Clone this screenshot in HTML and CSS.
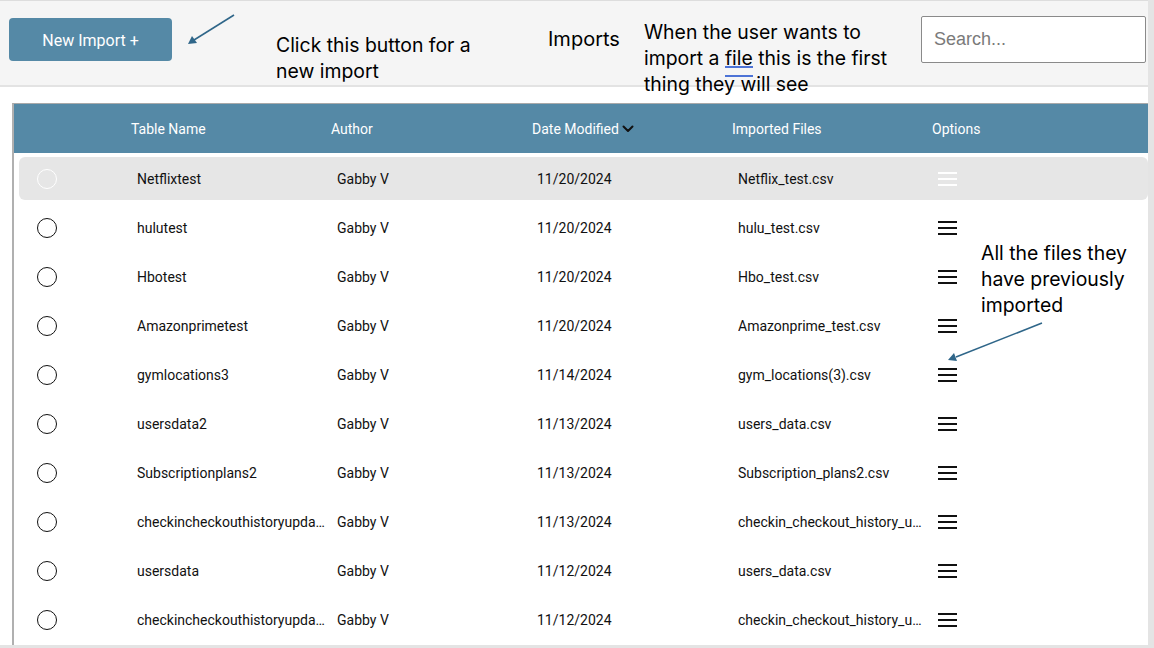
FILE: index.html
```html
<!DOCTYPE html>
<html lang="en">
<head>
<meta charset="utf-8">
<title>Imports</title>
<link rel="stylesheet" href="styles.css">
</head>
<body>
<div class="page">
  <header class="topbar">
    <button class="new-btn">New Import +</button>
    <h1 class="title">Imports</h1>
    <input class="search" type="text" placeholder="Search...">
  </header>

  <section class="table">
    <div class="thead">
      <div class="cell"></div>
      <div class="cell">Table Name</div>
      <div class="cell">Author</div>
      <div class="cell">Date Modified <svg class="chev" width="12" height="8" viewBox="0 0 12 8"><path d="M1.5 1.5 L6 6 L10.5 1.5" fill="none" stroke="#111" stroke-width="2" stroke-linecap="round" stroke-linejoin="round"/></svg></div>
      <div class="cell">Imported Files</div>
      <div class="cell">Options</div>
    </div>
    <div class="tbody">
      <div class="row active">
        <div class="cell"><span class="radio"></span></div>
        <div class="cell">Netflixtest</div>
        <div class="cell">Gabby V</div>
        <div class="cell">11/20/2024</div>
        <div class="cell">Netflix_test.csv</div>
        <div class="cell"><span class="menu"><i></i><i></i><i></i></span></div>
      </div>
      <div class="row">
        <div class="cell"><span class="radio"></span></div>
        <div class="cell">hulutest</div>
        <div class="cell">Gabby V</div>
        <div class="cell">11/20/2024</div>
        <div class="cell">hulu_test.csv</div>
        <div class="cell"><span class="menu"><i></i><i></i><i></i></span></div>
      </div>
      <div class="row">
        <div class="cell"><span class="radio"></span></div>
        <div class="cell">Hbotest</div>
        <div class="cell">Gabby V</div>
        <div class="cell">11/20/2024</div>
        <div class="cell">Hbo_test.csv</div>
        <div class="cell"><span class="menu"><i></i><i></i><i></i></span></div>
      </div>
      <div class="row">
        <div class="cell"><span class="radio"></span></div>
        <div class="cell">Amazonprimetest</div>
        <div class="cell">Gabby V</div>
        <div class="cell">11/20/2024</div>
        <div class="cell">Amazonprime_test.csv</div>
        <div class="cell"><span class="menu"><i></i><i></i><i></i></span></div>
      </div>
      <div class="row">
        <div class="cell"><span class="radio"></span></div>
        <div class="cell">gymlocations3</div>
        <div class="cell">Gabby V</div>
        <div class="cell">11/14/2024</div>
        <div class="cell">gym_locations(3).csv</div>
        <div class="cell"><span class="menu"><i></i><i></i><i></i></span></div>
      </div>
      <div class="row">
        <div class="cell"><span class="radio"></span></div>
        <div class="cell">usersdata2</div>
        <div class="cell">Gabby V</div>
        <div class="cell">11/13/2024</div>
        <div class="cell">users_data.csv</div>
        <div class="cell"><span class="menu"><i></i><i></i><i></i></span></div>
      </div>
      <div class="row">
        <div class="cell"><span class="radio"></span></div>
        <div class="cell">Subscriptionplans2</div>
        <div class="cell">Gabby V</div>
        <div class="cell">11/13/2024</div>
        <div class="cell">Subscription_plans2.csv</div>
        <div class="cell"><span class="menu"><i></i><i></i><i></i></span></div>
      </div>
      <div class="row">
        <div class="cell"><span class="radio"></span></div>
        <div class="cell">checkincheckouthistoryupdated</div>
        <div class="cell">Gabby V</div>
        <div class="cell">11/13/2024</div>
        <div class="cell">checkin_checkout_history_updated.csv</div>
        <div class="cell"><span class="menu"><i></i><i></i><i></i></span></div>
      </div>
      <div class="row">
        <div class="cell"><span class="radio"></span></div>
        <div class="cell">usersdata</div>
        <div class="cell">Gabby V</div>
        <div class="cell">11/12/2024</div>
        <div class="cell">users_data.csv</div>
        <div class="cell"><span class="menu"><i></i><i></i><i></i></span></div>
      </div>
      <div class="row">
        <div class="cell"><span class="radio"></span></div>
        <div class="cell">checkincheckouthistoryupdated2</div>
        <div class="cell">Gabby V</div>
        <div class="cell">11/12/2024</div>
        <div class="cell">checkin_checkout_history_updated2.csv</div>
        <div class="cell"><span class="menu"><i></i><i></i><i></i></span></div>
      </div>
    </div>
  </section>

  <p class="note note-btn">Click this button for a<br>new import</p>
  <p class="note note-top">When the user wants to<br>import a <span class="spell">file</span> this is the first<br>thing they will see</p>
  <p class="note note-files">All the files they<br>have previously<br>imported</p>

  <svg class="arrow arrow-btn" width="60" height="40" viewBox="0 0 60 40">
    <line x1="56" y1="2" x2="16" y2="27" stroke="#2f6689" stroke-width="1.6"/>
    <polygon points="10,31 14,23 19,30" fill="#2f6689"/>
  </svg>
  <svg class="arrow arrow-files" width="110" height="50" viewBox="0 0 110 50">
    <line x1="104" y1="3" x2="18" y2="37" stroke="#2f6689" stroke-width="1.6"/>
    <polygon points="10,40 16,33 19,41" fill="#2f6689"/>
  </svg>
</div>
</body>
</html>
```

FILE: styles.css
```css
* { box-sizing: border-box; }

html, body {
  margin: 0;
  padding: 0;
  background: #e4e4e4;
}

body {
  width: 1154px;
  height: 648px;
  overflow: hidden;
  font-family: Roboto, "Liberation Sans", sans-serif;
}

.page {
  position: relative;
  width: 1148px;
  height: 645px;
  background: #ffffff;
  overflow: hidden;
}

/* ---------- top bar ---------- */
.topbar {
  display: flex;
  align-items: center;
  height: 87px;
  padding: 14px 2px 22px 9px;
  background: #f5f5f5;
  border-top: 1px solid #dddddd;
  border-bottom: 2px solid #e3e3e3;
}

.new-btn {
  width: 163px;
  height: 43px;
  border: none;
  border-radius: 4px;
  background: #5589a6;
  color: #ffffff;
  font-family: Roboto, "Liberation Sans", sans-serif;
  font-size: 16px;
  padding: 3px 0 0 0;
}

.title {
  margin: 0 0 0 376px;
  font-family: Inter, "Noto Sans", sans-serif;
  font-size: 20px;
  font-weight: 400;
  color: #000;
}

.search {
  margin-left: auto;
  width: 225px;
  height: 47px;
  border: 1px solid #8a8a8a;
  border-radius: 2px;
  background: #ffffff;
  padding: 0 12px;
  font-family: "Liberation Sans", Arial, sans-serif;
  font-size: 18px;
  color: #333;
}
.search::placeholder { color: #7a7a7a; }

/* ---------- table ---------- */
.table {
  margin: 16px 0 0 12px;
  height: 542px;
  border-top: 1px solid #a9a9a9;
  border-left: 2px solid #b0b0b0;
}

.thead {
  display: grid;
  grid-template-columns: 117px 200px 201px 200px 200px 1fr;
  align-items: center;
  height: 49px;
  background: #5589a6;
  color: #ffffff;
  font-size: 14px;
}

.thead .cell {
  display: flex;
  align-items: center;
  gap: 3px;
}

.chev { margin-top: 1px; }

.tbody {
  display: flex;
  flex-direction: column;
  gap: 6px;
  padding: 4px 0 0 5px;
}

.row {
  display: grid;
  grid-template-columns: 118px 200px 200px 201px 200px 1fr;
  align-items: center;
  height: 43px;
  border-radius: 6px;
  font-size: 14px;
  color: #111111;
}

.row .cell {
  white-space: nowrap;
  overflow: hidden;
  text-overflow: ellipsis;
  padding-right: 12px;
}

.row.active { background: #e6e6e6; }

.radio {
  display: block;
  width: 20px;
  height: 20px;
  margin-left: 18px;
  border: 1.3px solid #111;
  border-radius: 50%;
}
.row.active .radio { border-color: #ffffff; }

.menu {
  display: flex;
  flex-direction: column;
  gap: 4px;
  width: 19px;
}
.menu i {
  display: block;
  height: 2px;
  background: #111;
}
.row.active .menu i { background: #ffffff; }

/* ---------- annotations ---------- */
.note {
  position: absolute;
  margin: 0;
  font-family: Inter, "Noto Sans", sans-serif;
  font-size: 19.4px;
  line-height: 25.5px;
  color: #000;
}
.note-btn { left: 276px; top: 33px; }
.note-top { left: 644px; top: 19px; line-height: 26px; }
.note-files { left: 981px; top: 240px; line-height: 26px; }

.spell {
  position: relative;
}
.spell::after {
  content: "";
  position: absolute;
  left: 0;
  right: 0;
  bottom: -7px;
  height: 7px;
  border-top: 2px solid #4d73d6;
  border-bottom: 2px solid #4d73d6;
}

.arrow { position: absolute; }
.arrow-btn { left: 178px; top: 13px; }
.arrow-files { left: 938px; top: 320px; }
```
